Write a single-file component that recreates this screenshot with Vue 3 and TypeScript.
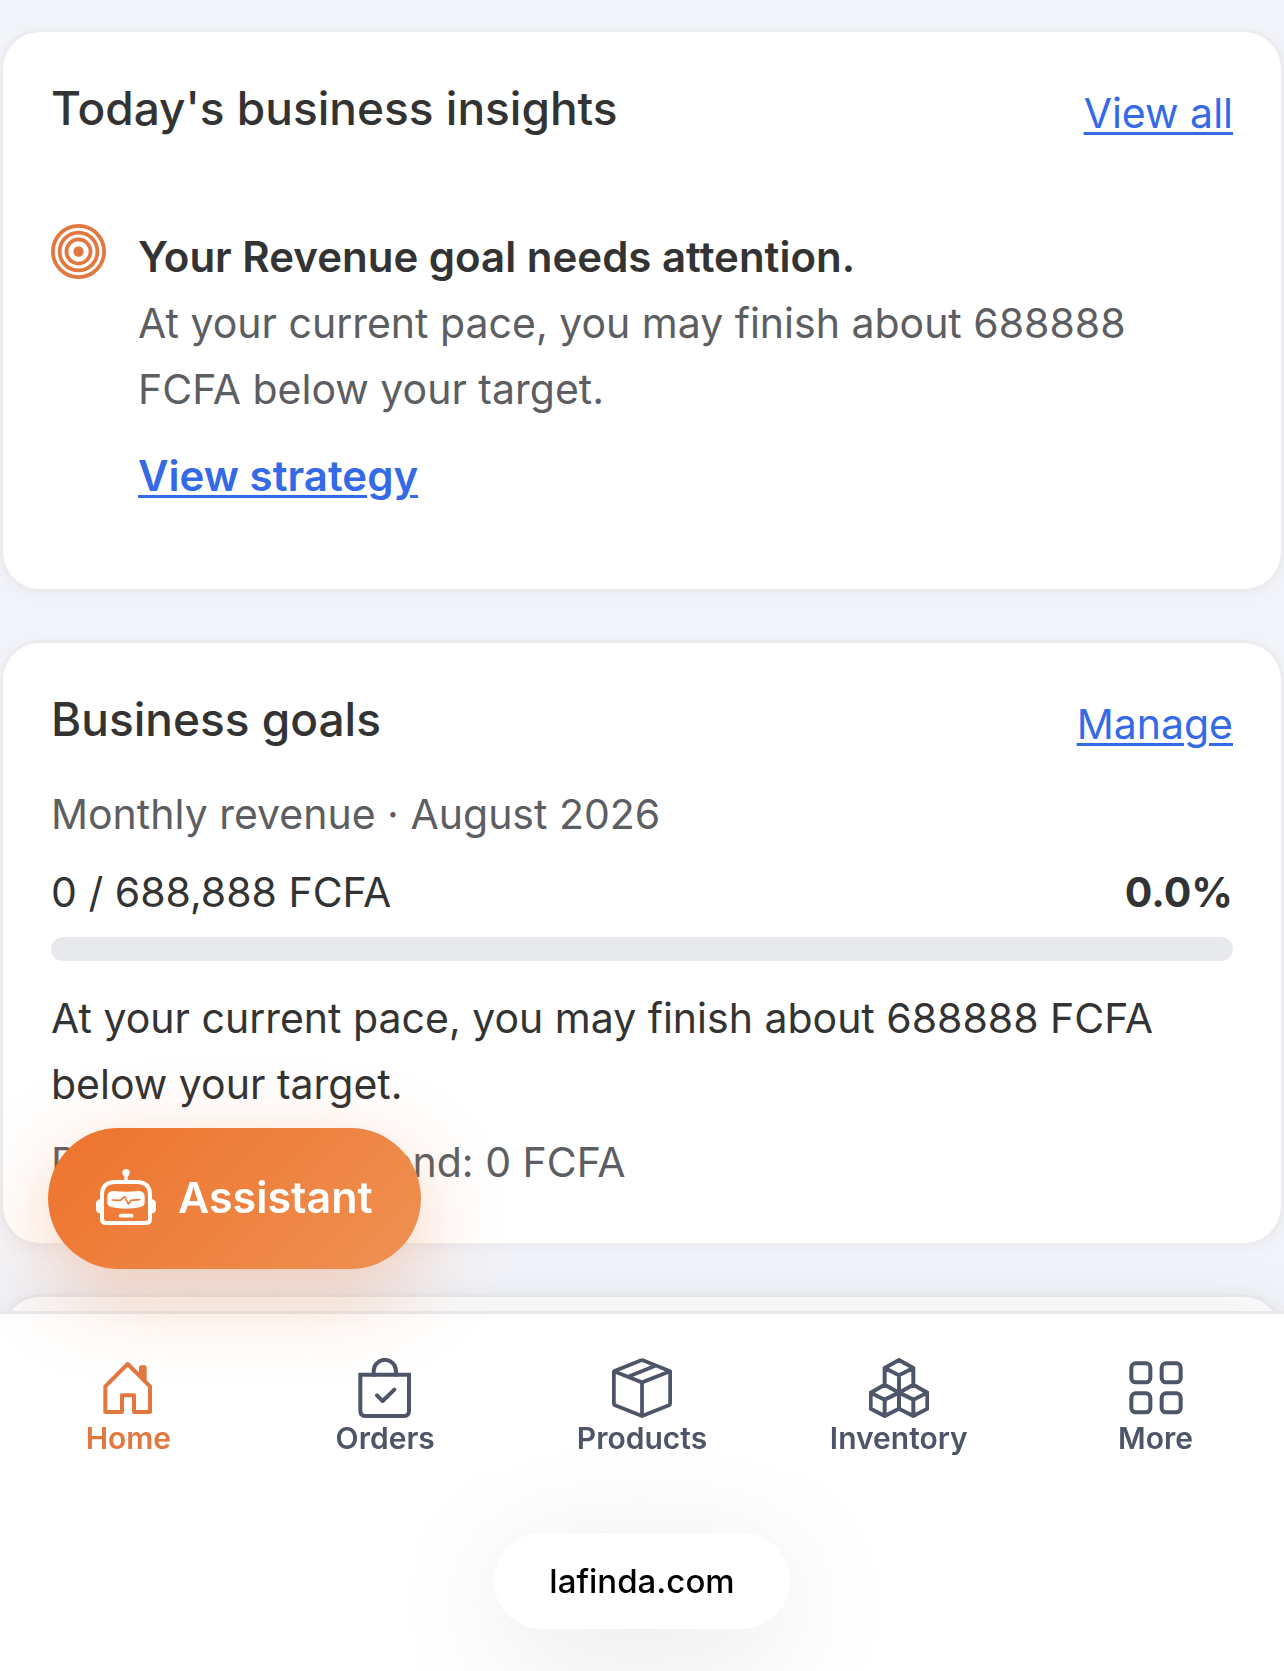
<script setup lang="ts">
interface NavItem {
  id: string
  label: string
}

const navItems: NavItem[] = [
  { id: 'home', label: 'Home' },
  { id: 'orders', label: 'Orders' },
  { id: 'products', label: 'Products' },
  { id: 'inventory', label: 'Inventory' },
  { id: 'more', label: 'More' },
]

const activeId = 'home'
const progress = 0
</script>

<template>
  <div class="page">
    <main class="feed">
      <section class="card">
        <header class="card-head">
          <h2>Today's business insights</h2>
          <a class="link" href="#insights">View all</a>
        </header>
        <article class="insight">
          <svg class="target" viewBox="0 0 16 16" aria-hidden="true">
            <g fill="none" stroke="currentColor" stroke-width="1.1">
              <circle cx="8" cy="8" r="7.45" />
              <circle cx="8" cy="8" r="5.5" />
              <circle cx="8" cy="8" r="3.5" />
            </g>
            <circle cx="8" cy="8" r="1.5" fill="currentColor" />
          </svg>
          <div class="insight-body">
            <h3>Your Revenue goal needs attention.</h3>
            <p class="muted">At your current pace, you may finish about 688888 FCFA below your target.</p>
            <a class="link strong" href="#strategy">View strategy</a>
          </div>
        </article>
      </section>

      <section class="card">
        <header class="card-head">
          <h2>Business goals</h2>
          <a class="link" href="#goals">Manage</a>
        </header>
        <div class="goal">
          <p class="muted">Monthly revenue · August 2026</p>
          <div class="goal-row">
            <span>0 / 688,888 FCFA</span>
            <strong>0.0%</strong>
          </div>
          <div class="track" role="progressbar" aria-label="Monthly revenue" :aria-valuenow="progress">
            <div class="bar" :style="{ width: progress + '%' }"></div>
          </div>
          <p class="forecast">At your current pace, you may finish about 688888 FCFA below your target.</p>
          <p class="muted">Projected month-end: 0 FCFA</p>
        </div>
      </section>

      <section class="card upcoming"></section>
    </main>

    <footer class="dock">
      <nav class="tabs" aria-label="Main">
        <a
          v-for="item in navItems"
          :key="item.id"
          class="tab"
          :class="{ active: item.id === activeId }"
          :href="'#' + item.id"
        >
          <svg v-if="item.id === 'home'" viewBox="55 54 180 180" aria-hidden="true">
            <path d="M77 139L144 72L211 139V216H163V166H127V216H77Z" class="stroke" />
            <path d="M178 104V83q0-7 7-7h9q7 0 7 7v44Z" fill="currentColor" />
          </svg>
          <svg v-else-if="item.id === 'orders'" viewBox="106 54 180 180" aria-hidden="true">
            <path d="M122 104H268V212q0 16-17 16H139q-17 0-17-16Z" class="stroke miter" />
            <path d="M162 104V93a33 33 0 0 1 67 0V104M172 166L189 183L224 149" class="stroke" />
          </svg>
          <svg v-else-if="item.id === 'products'" viewBox="0 0 16 16" aria-hidden="true">
            <path
              fill="currentColor"
              d="M8.186 1.113a.5.5 0 0 0-.372 0L1.846 3.5l2.404.961L10.404 2zm3.564 1.426L5.596 5 8 5.961 14.154 3.5zm3.250 1.700-6.500 2.600v7.922l6.500-2.600V4.240zM7.500 14.762V6.838L1 4.239v7.923zM7.443.184a1.500 1.500 0 0 1 1.114 0l7.129 2.852A.5.5 0 0 1 16 3.500v8.662a1 1 0 0 1-.629.928l-7.185 2.874a.5.5 0 0 1-.372 0L.630 13.090a1 1 0 0 1-.630-.928V3.500a.5.5 0 0 1 .314-.464z"
            />
          </svg>
          <svg v-else-if="item.id === 'inventory'" viewBox="144 54 180 180" aria-hidden="true">
            <path
              class="stroke"
              d="M191 134V84L234 60L277 84V134M191 84L234 106L277 84M234 106V158M149 158L191 134L234 158L191 179ZM149 158V206L191 228L234 206V158M191 179V228M319 158L277 134L234 158L277 179ZM319 158V206L277 228L234 206M277 179V228"
            />
          </svg>
          <svg v-else viewBox="75 54 180 180" aria-hidden="true">
            <g class="stroke">
              <rect x="91" y="70" width="57" height="57" rx="13" />
              <rect x="182" y="70" width="57" height="57" rx="13" />
              <rect x="91" y="160" width="57" height="57" rx="13" />
              <rect x="182" y="160" width="57" height="57" rx="13" />
            </g>
          </svg>
          <span>{{ item.label }}</span>
        </a>
      </nav>
      <button class="address" type="button">lafinda.com</button>
    </footer>

    <button class="assistant" type="button">
      <svg viewBox="48 57 180 171" aria-hidden="true">
        <path d="M66 136q0-40 40-40h64q40 0 40 40v70q0 13-13 13H79q-13 0-13-13Z" fill="none" stroke="currentColor" stroke-width="12" />
        <path d="M62 147q-14 2-14 14v16q0 12 14 14ZM214 147q14 2 14 14v16q0 12-14 14Z" fill="currentColor" />
        <circle cx="138" cy="68" r="11" fill="currentColor" />
        <path d="M138 72V94" stroke="currentColor" stroke-width="10" />
        <path d="M100 123q38 5 76 0q18 0 18 18v16q0 12-14 15q-42 8-84 0q-14-3-14-15v-16q0-18 18-18Z" fill="currentColor" />
        <path d="M97 150L121 151L134 140L145 162L153 151L179 149" fill="none" stroke="#ed7c37" stroke-width="5" stroke-linecap="round" stroke-linejoin="round" />
        <path d="M122 197H155" stroke="currentColor" stroke-width="11" stroke-linecap="round" />
      </svg>
      <span>Assistant</span>
    </button>
  </div>
</template>

<style>
body {
  margin: 0;
  background: #f3f4f9;
}
</style>

<style scoped>
.page {
  font-family: Inter, "Liberation Sans", sans-serif;
  font-size: 41px;
  line-height: 66px;
  color: #333;
}

.feed {
  display: flex;
  flex-direction: column;
  gap: 48px;
  padding-top: 29px;
}

.card {
  box-sizing: border-box;
  padding: 48px;
  border: 3px solid #ebecef;
  border-radius: 40px;
  background: #fff;
  background-clip: padding-box;
  box-shadow: 0 3px 18px rgba(30, 35, 60, 0.04);
}

.upcoming {
  min-height: 300px;
}

.card-head {
  display: flex;
  align-items: flex-start;
  justify-content: space-between;
  gap: 24px;
  margin-bottom: 24px;
}

h2,
h3,
p {
  margin: 0;
}

h2 {
  font-size: 46px;
  line-height: 56px;
  font-weight: 500;
}

h3 {
  font-size: 42px;
  font-weight: 600;
}

.link {
  color: #356ae6;
  text-decoration: underline;
  text-decoration-thickness: 3px;
  text-underline-offset: 4px;
}

.strong {
  font-size: 42px;
  font-weight: 600;
}

.muted {
  color: #5d5e62;
}

.insight {
  display: flex;
  align-items: flex-start;
  gap: 32px;
  padding: 54px 0 32px;
}

.target {
  flex: none;
  width: 55px;
  height: 55px;
  color: #e07840;
}

.insight-body {
  display: flex;
  flex-direction: column;
  align-items: flex-start;
}

.insight-body .link {
  margin-top: 21px;
}

.goal {
  display: flex;
  flex-direction: column;
  gap: 12px;
}

.goal-row {
  display: flex;
  justify-content: space-between;
}

.goal-row strong {
  font-weight: 700;
}

.track {
  height: 24px;
  border-radius: 12px;
  background: #e8e9ed;
  overflow: hidden;
}

.bar {
  height: 100%;
  background: #ed7530;
}

.forecast {
  margin-top: 12px;
}

.dock {
  position: fixed;
  left: 0;
  right: 0;
  bottom: 0;
  display: flex;
  flex-direction: column;
  align-items: center;
  padding: 44px 0 42px;
  gap: 75px;
  border-top: 3px solid #e8e8eb;
  background: #fff;
  box-shadow: 0 -6px 60px rgba(30, 35, 60, 0.07);
}

.tabs {
  display: grid;
  grid-template-columns: repeat(5, 1fr);
  width: 100%;
}

.tab {
  display: flex;
  flex-direction: column;
  align-items: center;
  font-size: 30px;
  line-height: 40px;
  font-weight: 600;
  color: #4d5568;
  text-decoration: none;
}

.tab svg {
  width: 60px;
  height: 60px;
}

.tab.active {
  color: #e07840;
}

.stroke {
  fill: none;
  stroke: currentColor;
  stroke-width: 12;
  stroke-linecap: round;
  stroke-linejoin: round;
}

.miter {
  stroke-linejoin: miter;
}

.address {
  padding: 24px 55px;
  border: 0;
  border-radius: 48px;
  background: #fff;
  color: #000;
  font-family: inherit;
  font-size: 33px;
  line-height: 48px;
  font-weight: 500;
  box-shadow: 0 24px 132px rgba(0, 0, 0, 0.1);
}

.assistant {
  position: fixed;
  left: 48px;
  bottom: 402px;
  display: flex;
  align-items: center;
  gap: 22px;
  padding: 36px 48px 39px;
  border: 0;
  border-radius: 72px;
  background: linear-gradient(135deg, #ed732d, #ef9152);
  color: #fff;
  font-family: inherit;
  font-size: 43px;
  line-height: 66px;
  font-weight: 600;
  box-shadow: 0 24px 84px rgba(237, 117, 48, 0.34);
}

.assistant svg {
  width: 60px;
  height: 57px;
}
</style>
